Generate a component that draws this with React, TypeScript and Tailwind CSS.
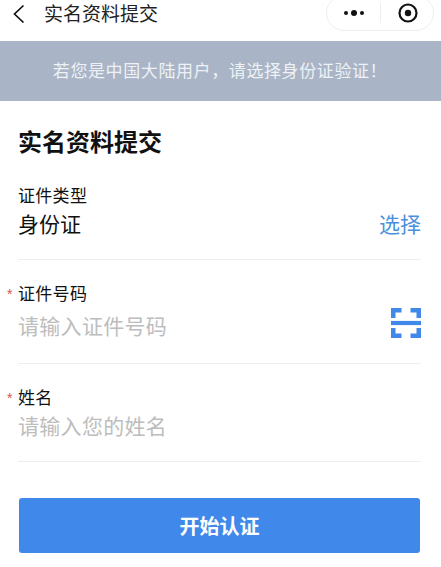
const cjk = "font-['Liberation_Sans','Noto_Sans_CJK_SC',sans-serif]";

function Field({
  label,
  required,
  children,
  className,
}: {
  label: string;
  required?: boolean;
  children: React.ReactNode;
  className: string;
}) {
  return (
    <div className={`border-b border-[#eeeeee] ${className}`}>
      <div className="relative pt-px text-[17px] leading-[24px] tracking-[0.3px] text-[#111111]">
        {required && (
          <span className="absolute left-[-11px] top-0 text-[14px] text-[#d9534f]">*</span>
        )}
        {label}
      </div>
      {children}
    </div>
  );
}

export default function App() {
  return (
    <div className={`h-[567px] w-[441px] overflow-hidden bg-white ${cjk}`}>
      <header className="flex h-[41px] items-start overflow-hidden bg-white">
        <svg className="ml-[12px] mt-[4px] h-[20px] w-[14px]" viewBox="0 0 14 20" fill="none">
          <path d="M11.5 1.5 2.5 10l9 8.5" stroke="#111111" strokeWidth="1.7" />
        </svg>
        <h2 className="ml-[18px] pt-[1px] text-[19px] leading-[28px] text-[#222222]">实名资料提交</h2>
        <div className="ml-auto mr-[7px] mt-[-5px] flex h-[36px] w-[108px] items-center rounded-full border border-[#eeeeee]">
          <div className="flex w-[53px] items-center justify-center gap-[3px]">
            <span className="h-[4px] w-[4px] rounded-full bg-[#111111]" />
            <span className="h-[6px] w-[6px] rounded-full bg-[#111111]" />
            <span className="h-[4px] w-[4px] rounded-full bg-[#111111]" />
          </div>
          <div className="h-[20px] w-px bg-[#eeeeee]" />
          <div className="flex flex-1 items-center justify-center pl-[2px]">
            <svg className="h-[20px] w-[20px]" viewBox="0 0 20 20" fill="none">
              <circle cx="10" cy="10" r="8.5" stroke="#111111" strokeWidth="2.2" />
              <circle cx="10" cy="10" r="3.2" fill="#111111" />
            </svg>
          </div>
        </div>
      </header>

      <div className="flex h-[60px] items-center justify-center bg-[#a9b5c6] pr-[1px] pt-[2px] text-[17px] tracking-[0.6px] text-[#eef1f5]">
        若您是中国大陆用户，请选择身份证验证！
      </div>

      <main className="pl-[18px] pr-[20px]">
        <h1 className="mt-[26px] text-[24px] font-bold leading-[32px] text-[#111111]">实名资料提交</h1>

        <Field label="证件类型" className="mt-[25px] h-[76px]">
          <div className="mt-[2px] flex items-center justify-between text-[21px] leading-[28px]">
            <span className="text-[#111111]">身份证</span>
            <span className="text-[#4a8fdc]">选择</span>
          </div>
        </Field>

        <Field label="证件号码" required className="mt-[22px] h-[82px]">
          <div className="mt-[6px] flex items-start justify-between text-[21px] leading-[28px]">
            <span className="tracking-[0.3px] text-[#bdbdbd]">请输入证件号码</span>
            <svg className="mt-[-5px] h-[30px] w-[30px]" viewBox="0 0 30 30" fill="none">
              <path
                d="M2.25 10V2.25H10.5M19.5 2.25h8.25V10M2.25 20v7.75H10.5M19.5 27.75h8.25V20"
                stroke="#4089ea"
                strokeWidth="4.5"
              />
              <path d="M0 15h30" stroke="#4089ea" strokeWidth="4.2" />
            </svg>
          </div>
        </Field>

        <Field label="姓名" required className="mt-[22px] h-[76px]">
          <div className="mt-[2px] text-[21px] leading-[28px] tracking-[0.3px] text-[#bdbdbd]">请输入您的姓名</div>
        </Field>

        <button className="ml-px mt-[36px] flex h-[55px] w-[401px] items-center justify-center rounded-[3px] bg-[#4089ea] pt-[2px] text-[20px] font-bold text-white">
          开始认证
        </button>
      </main>
    </div>
  );
}
